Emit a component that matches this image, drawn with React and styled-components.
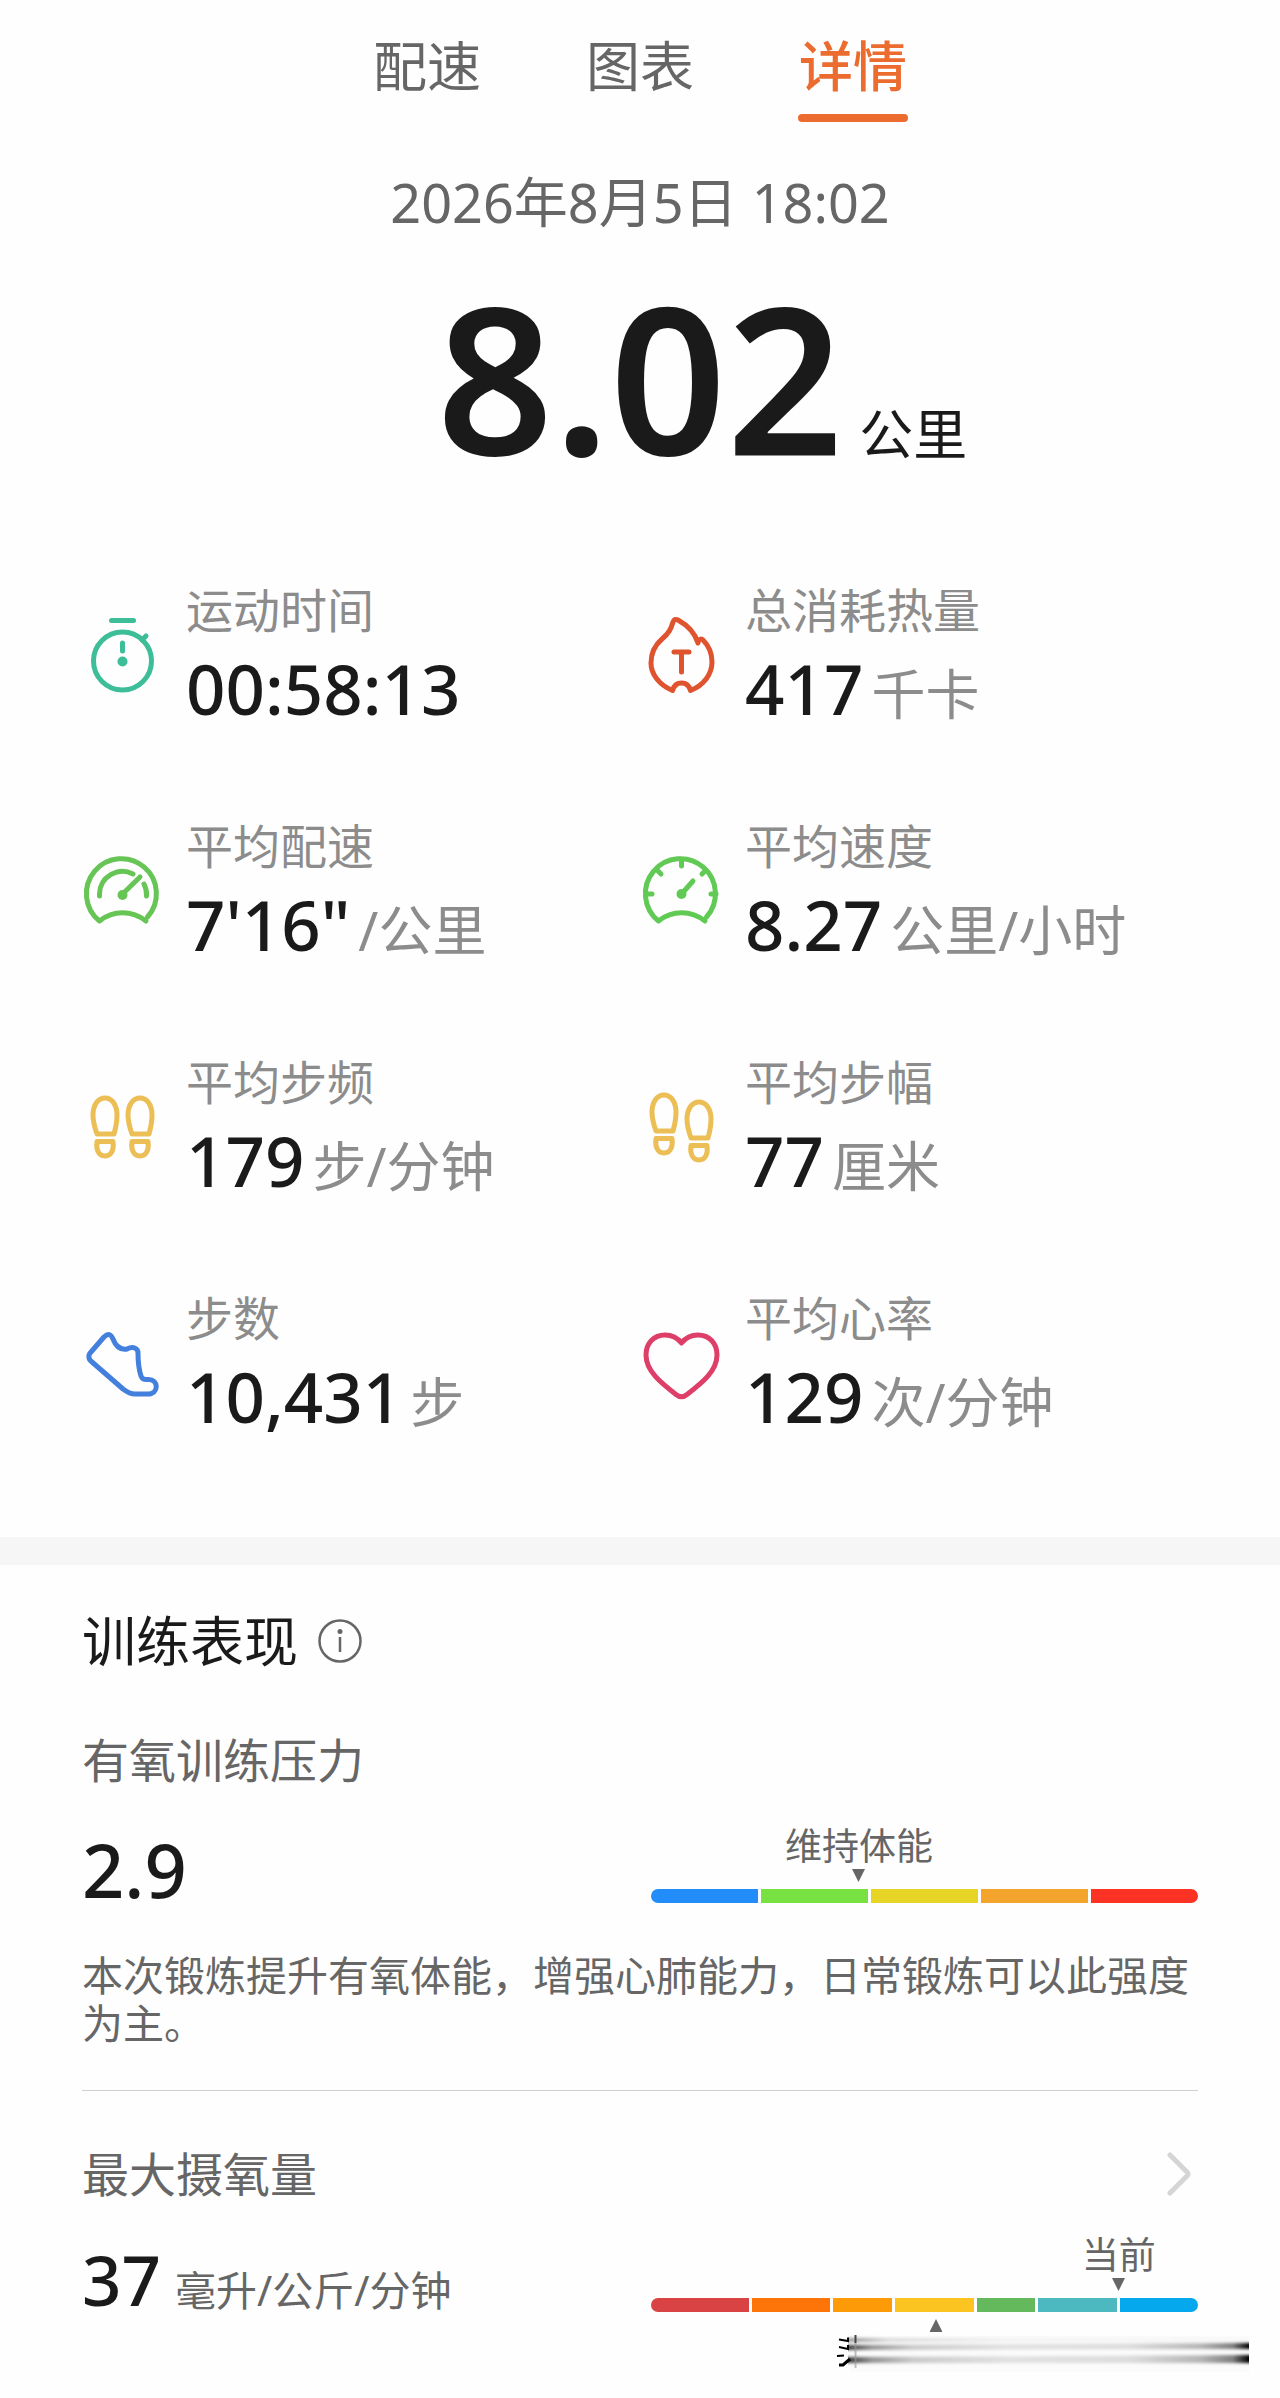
import React from 'react';
import styled, { createGlobalStyle } from 'styled-components';

const tabs = ['配速', '图表', '详情'];

const strokeProps = {
  fill: 'none',
  strokeWidth: 5,
  strokeLinecap: 'round',
  strokeLinejoin: 'round'
};

const StopwatchIcon = () => (
  <Icon viewBox="0 0 80 80" stroke="#3dbd98" {...strokeProps}>
    <path d="M29.500 4.500H51.500" />
    <circle cx="40.500" cy="45" r="29" />
    <path d="M60 24L64 20" />
    <path d="M40.500 27V35" />
    <circle cx="40.500" cy="45.500" r="5" fill="#3dbd98" stroke="none" />
  </Icon>
);

const FlameIcon = () => (
  <Icon viewBox="0 0 80 80" stroke="#e0532f" {...strokeProps}>
    <path d="M31.500 74.500C18 69 10 58 10 47C10 36 14 29 21 23C28 17 30 13 32 6C33 3 35 3 37 4C46 9 54 17 57 27C57 24 60 22 62 24C68 30 71 38 71 46C71 58 63 69 49.500 74.500C48 69 45 67 40.500 67C36 67 33 69 31.500 74.500Z" />
    <path d="M33 36H48M40.500 36V56" />
  </Icon>
);

const PaceIcon = () => (
  <Icon viewBox="0 0 80 80" stroke="#67c555" {...strokeProps}>
    <path d="M65.500 65A35 35 0 1 0 17.500 69C31 58 50 58 64 69" />
    <path d="M17.500 44V42A23 23 0 0 1 51 22" />
    <path d="M62 32Q65 38 64.500 44" />
    <path d="M40.500 42L58 25" />
    <circle cx="40.500" cy="43" r="5" fill="#67c555" stroke="none" />
  </Icon>
);

const SpeedIcon = () => (
  <Icon viewBox="0 0 80 80" stroke="#61ca54" {...strokeProps}>
    <path d="M65.500 65A35 35 0 1 0 17.500 69C31 58 50 58 64 69" />
    <path d="M40.500 9V14M16 18L20 22M65 18L61 22M6 42H11M75 42H70" />
    <path d="M40.500 42L52 29" />
    <circle cx="40.500" cy="42" r="5" fill="#61ca54" stroke="none" />
  </Icon>
);

const Shoe = () => (
  <>
    <path d="M4 36C1.500 29 0 23 0 17C0 7 5 0 12 0C19 0 24 7 24 17C24 23 23 29 21 36Z" />
    <path d="M4 43.500H20C21 51 19 58 12 58C5 58 3 51 4 43.500Z" />
  </>
);

const CadenceIcon = () => (
  <Icon viewBox="0 0 80 80" stroke="#ecbf56" {...strokeProps}>
    <g transform="translate(11 10)"><Shoe /></g>
    <g transform="translate(46 10)"><Shoe /></g>
  </Icon>
);

const StrideIcon = () => (
  <Icon viewBox="0 0 80 80" stroke="#ecbf56" {...strokeProps}>
    <g transform="translate(11 7)"><Shoe /></g>
    <g transform="translate(46 14)"><Shoe /></g>
  </Icon>
);

const StepsIcon = () => (
  <Icon viewBox="0 0 80 80" stroke="#437fdc" {...strokeProps}>
    <path d="M9 28L22 13C26 9 29 10 31 15C34 23 39 26 45 25C51 22 56 24 56 29C56 38 57 46 59 52C60 55 62 56 66 55.500C77 55 77 70 66 70H53C48 70 45 68 41 65L10 38C6 35 6 31 9 28Z" />
  </Icon>
);

const HeartIcon = () => (
  <Icon viewBox="0 0 80 80" stroke="#dd3f68" {...strokeProps}>
    <path d="M40.500 19C35 12 29 11 24 11C13 11 5 19 5 31C5 47 20 59 35 70.500Q40.500 75 46 70.500C61 59 76 47 76 31C76 19 68 11 57 11C52 11 46 12 40.500 19Z" />
  </Icon>
);

const metrics = [
  { icon: StopwatchIcon, label: '运动时间', value: '00:58:13' },
  { icon: FlameIcon, label: '总消耗热量', value: '417', unit: '千卡' },
  { icon: PaceIcon, label: '平均配速', value: '7\'16"', unit: '/公里' },
  { icon: SpeedIcon, label: '平均速度', value: '8.27', unit: '公里/小时' },
  { icon: CadenceIcon, label: '平均步频', value: '179', unit: '步/分钟' },
  { icon: StrideIcon, label: '平均步幅', value: '77', unit: '厘米' },
  { icon: StepsIcon, label: '步数', value: '10,431', unit: '步' },
  { icon: HeartIcon, label: '平均心率', value: '129', unit: '次/分钟' }
];

const stressLevels = [
  { color: '#228cf8', size: 1 },
  { color: '#78e242', size: 1 },
  { color: '#e6d426', size: 1 },
  { color: '#f2a42c', size: 1 },
  { color: '#fb3224', size: 1 }
];

const oxygenLevels = [
  { color: '#d94343', size: 5 },
  { color: '#fd7409', size: 4 },
  { color: '#fc9a08', size: 3 },
  { color: '#fbc421', size: 4 },
  { color: '#64b95c', size: 3 },
  { color: '#4cb8bf', size: 4 },
  { color: '#05a8ed', size: 4 }
];

const Scale = ({ levels, label, position, average }) => (
  <ScaleWrapper>
    <Marker style={{ left: `${position}%` }}>
      {label}
      <Arrow viewBox="0 0 13 13"><path d="M0 0H13L6.500 13Z" /></Arrow>
    </Marker>
    <Track>
      {levels.map(level => (
        <Segment key={level.color} $color={level.color} $size={level.size} />
      ))}
    </Track>
    {average && (
      <AverageMarker style={{ left: `${average}%` }}>
        <Arrow viewBox="0 0 13 13"><path d="M6.500 0L13 13H0Z" /></Arrow>
      </AverageMarker>
    )}
  </ScaleWrapper>
);

// Leftover of the erased caption under the scale
const Smear = () => (
  <SmearDrawing viewBox="0 0 414 40" aria-hidden="true">
    <defs>
      <linearGradient id="smear">
        <stop offset="0" stopColor="#000" stopOpacity="0.75" />
        <stop offset="0.06" stopColor="#000" stopOpacity="0.4" />
        <stop offset="0.16" stopColor="#000" stopOpacity="0.2" />
        <stop offset="0.4" stopColor="#000" stopOpacity="0.1" />
        <stop offset="0.7" stopColor="#000" stopOpacity="0.12" />
        <stop offset="0.88" stopColor="#000" stopOpacity="0.28" />
        <stop offset="0.96" stopColor="#000" stopOpacity="0.5" />
        <stop offset="1" stopColor="#000" />
      </linearGradient>
      <linearGradient id="faint">
        <stop offset="0" stopColor="#000" stopOpacity="0.4" />
        <stop offset="0.1" stopColor="#000" stopOpacity="0.12" />
        <stop offset="0.4" stopColor="#000" stopOpacity="0.03" />
        <stop offset="1" stopColor="#000" stopOpacity="0.01" />
      </linearGradient>
      <filter id="soft" x="0" y="-1" width="1" height="3">
        <feGaussianBlur stdDeviation="0 1.500" />
      </filter>
    </defs>
    <rect x="14" y="1" width="399" height="36" fill="#000" opacity="0.012" />
    <g filter="url(#soft)">
      <path d="M12 3H413V7H12Z" fill="url(#faint)" />
      <path d="M12 10L413 8V14L12 15Z" fill="url(#smear)" />
      <path d="M12 22L413 20V28H12Z" fill="url(#smear)" />
    </g>
    <path d="M19.500 0V8" stroke="#444" strokeWidth="2" />
    <path d="M19.500 8V33" stroke="#999" strokeWidth="2" opacity="0.6" />
    <path d="M3 4.500L12 6V2.500M3 12L12 14V10M1 21L8 20.500" stroke="#000" strokeWidth="2" fill="none" />
    <path d="M3 30H7L14 24" stroke="#000" strokeWidth="3" fill="none" />
  </SmearDrawing>
);

const App = () => {
  const renderMetric = ({ icon: MetricIcon, label, value, unit }) => (
    <Metric key={label}>
      <MetricIcon />
      <div>
        <MetricLabel>{label}</MetricLabel>
        <MetricValue>
          {value}
          {unit && <MetricUnit>{unit}</MetricUnit>}
        </MetricValue>
      </div>
    </Metric>
  );

  return (
    <>
      <GlobalStyle />
      <Page>
        <Tabs>
          {tabs.map(tab => (
            <Tab key={tab} type="button" $active={tab === '详情'}>{tab}</Tab>
          ))}
        </Tabs>
        <DateText>2026年8月5日 18:02</DateText>
        <Distance>
          <DistanceValue>8.02</DistanceValue>
          <DistanceUnit>公里</DistanceUnit>
        </Distance>
        <Metrics>{metrics.map(renderMetric)}</Metrics>
        <Divider />
        <Training>
          <TitleRow>
            <Title>训练表现</Title>
            <InfoButton type="button" aria-label="说明">
              <InfoIcon viewBox="0 0 44 44">
                <circle cx="22" cy="22" r="20.500" fill="none" stroke="#666" strokeWidth="2.500" />
                <circle cx="22" cy="12.500" r="2.500" fill="#666" />
                <path d="M22 18V33" stroke="#666" strokeWidth="2.500" />
              </InfoIcon>
            </InfoButton>
          </TitleRow>
          <StressHeader>
            <SubTitle>有氧训练压力</SubTitle>
          </StressHeader>
          <ScoreRow $large>
            <Score $large>2.9</Score>
            <Scale levels={stressLevels} label="维持体能" position={38} />
          </ScoreRow>
          <Description>
            本次锻炼提升有氧体能，增强心肺能力，日常锻炼可以此强度为主。
          </Description>
          <OxygenLink href="#oxygen">
            <SubTitle>最大摄氧量</SubTitle>
            <Chevron viewBox="0 0 24 44">
              <path d="M3 3L20 20Q22 22 20 24L3 41" />
            </Chevron>
          </OxygenLink>
          <ScoreRow>
            <Score>
              37
              <ScoreUnit>毫升/公斤/分钟</ScoreUnit>
            </Score>
            <Scale levels={oxygenLevels} label="当前" position={85.5} average={52} />
          </ScoreRow>
          <Smear />
        </Training>
      </Page>
    </>
  );
};

export default App;

const GlobalStyle = createGlobalStyle`
  body {
    margin: 0;
    background: #fefefe;
  }
`;

const Page = styled.main`
  color: #1a1a1a;
  font-family: "Noto Sans", "Noto Sans CJK SC", sans-serif;
`;

const Tabs = styled.nav`
  display: flex;
  gap: 103px;
  padding-top: 30px;
  justify-content: center;
`;

const Tab = styled.button`
  border: 0;
  padding: 0;
  display: flex;
  background: none;
  align-items: center;
  flex-direction: column;

  color: ${props => (props.$active ? '#ec6c2f' : '#666666')};
  font-size: 54px;
  font-family: inherit;
  font-weight: ${props => (props.$active ? 500 : 400)};
  line-height: 72px;

  &::after {
    content: '';
    width: 110px;
    height: 8px;
    margin-top: 12px;
    border-radius: 4px;
    background: ${props => (props.$active ? '#ec6c2f' : 'transparent')};
  }
`;

const DateText = styled.div`
  margin-top: 44px;
  color: #666666;
  font-size: 54px;
  text-align: center;
  line-height: 72px;
`;

const Distance = styled.div`
  display: grid;
  column-gap: 16px;
  margin-top: 18px;
  align-items: baseline;
  grid-template-columns: 1fr auto 1fr;
`;

const DistanceValue = styled.strong`
  grid-column: 2;
  font-size: 204px;
  font-weight: 600;
  line-height: 240px;
`;

const DistanceUnit = styled.span`
  font-size: 54px;
  line-height: 72px;
`;

const Metrics = styled.section`
  display: grid;
  row-gap: 86px;
  padding: 82px 80px 101px 82px;
  grid-template-columns: 1fr 1fr;
`;

const Metric = styled.div`
  gap: 24px;
  display: flex;
  align-items: center;
`;

const Icon = styled.svg`
  width: 80px;
  height: 80px;
  margin-top: 6px;
  flex-shrink: 0;
`;

const MetricLabel = styled.div`
  color: #8c8c8c;
  font-size: 47px;
  line-height: 64px;
`;

const MetricValue = styled.div`
  margin-top: 6px;
  font-size: 69px;
  font-weight: 500;
  line-height: 80px;
  white-space: nowrap;
`;

const MetricUnit = styled.span`
  color: #8c8c8c;
  font-size: 54px;
  font-weight: 400;
  line-height: 64px;
  margin-left: 8px;
`;

const Divider = styled.div`
  height: 28px;
  background: #f6f6f6;
`;

const Training = styled.section`
  padding: 40px 82px 22px;
`;

const TitleRow = styled.div`
  gap: 20px;
  display: flex;
  align-items: center;
`;

const Title = styled.h2`
  margin: 0;
  font-size: 54px;
  font-weight: 400;
  line-height: 72px;
`;

const InfoButton = styled.button`
  border: 0;
  padding: 0;
  display: flex;
  background: none;
`;

const InfoIcon = styled.svg`
  width: 44px;
  height: 44px;
`;

const StressHeader = styled.div`
  margin-top: 51px;
`;

const SubTitle = styled.h3`
  margin: 0;
  color: #666666;
  font-size: 47px;
  font-weight: 400;
  line-height: 64px;
`;

const ScoreRow = styled.div`
  display: flex;
  margin-top: ${props => (props.$large ? 38 : 33)}px;
  align-items: flex-end;
  justify-content: space-between;
`;

const Score = styled.div`
  font-size: ${props => (props.$large ? 74 : 69)}px;
  font-weight: 500;
  line-height: 80px;
  white-space: nowrap;
`;

const ScoreUnit = styled.span`
  color: #666666;
  font-size: 41px;
  font-weight: 400;
  line-height: 56px;
  margin-left: 14px;
`;

const ScaleWrapper = styled.div`
  width: 49%;
  position: relative;
  margin-bottom: 7px;
`;

const Marker = styled.div`
  bottom: 100%;
  display: flex;
  position: absolute;
  align-items: center;
  flex-direction: column;
  transform: translateX(-50%);
  padding-bottom: 7px;

  color: #666666;
  font-size: 37px;
  line-height: 46px;
  white-space: nowrap;
`;

const AverageMarker = styled.div`
  top: 100%;
  display: flex;
  position: absolute;
  transform: translateX(-50%);
  padding-top: 7px;
`;

const Arrow = styled.svg`
  width: 13px;
  height: 13px;
  fill: #666666;
`;

const Track = styled.div`
  gap: 3px;
  height: 14px;
  display: flex;
  overflow: hidden;
  border-radius: 7px;
`;

const Segment = styled.span`
  flex: ${props => props.$size};
  background: ${props => props.$color};
`;

const Description = styled.p`
  margin: 41px 0 0;
  padding-bottom: 43px;
  border-bottom: 1px solid #d0d0d0;

  color: #666666;
  font-size: 41px;
  line-height: 48px;
`;

const OxygenLink = styled.a`
  display: flex;
  margin-top: 51px;
  align-items: center;
  text-decoration: none;
  justify-content: space-between;
`;

const Chevron = styled.svg`
  width: 24px;
  height: 44px;
  margin-right: 7px;

  fill: none;
  stroke: #d5d5d5;
  stroke-width: 5px;
  stroke-linecap: round;
`;

const SmearDrawing = styled.svg`
  width: 414px;
  height: 40px;
  display: block;
  margin: 16px -52px 0 auto;
`;
